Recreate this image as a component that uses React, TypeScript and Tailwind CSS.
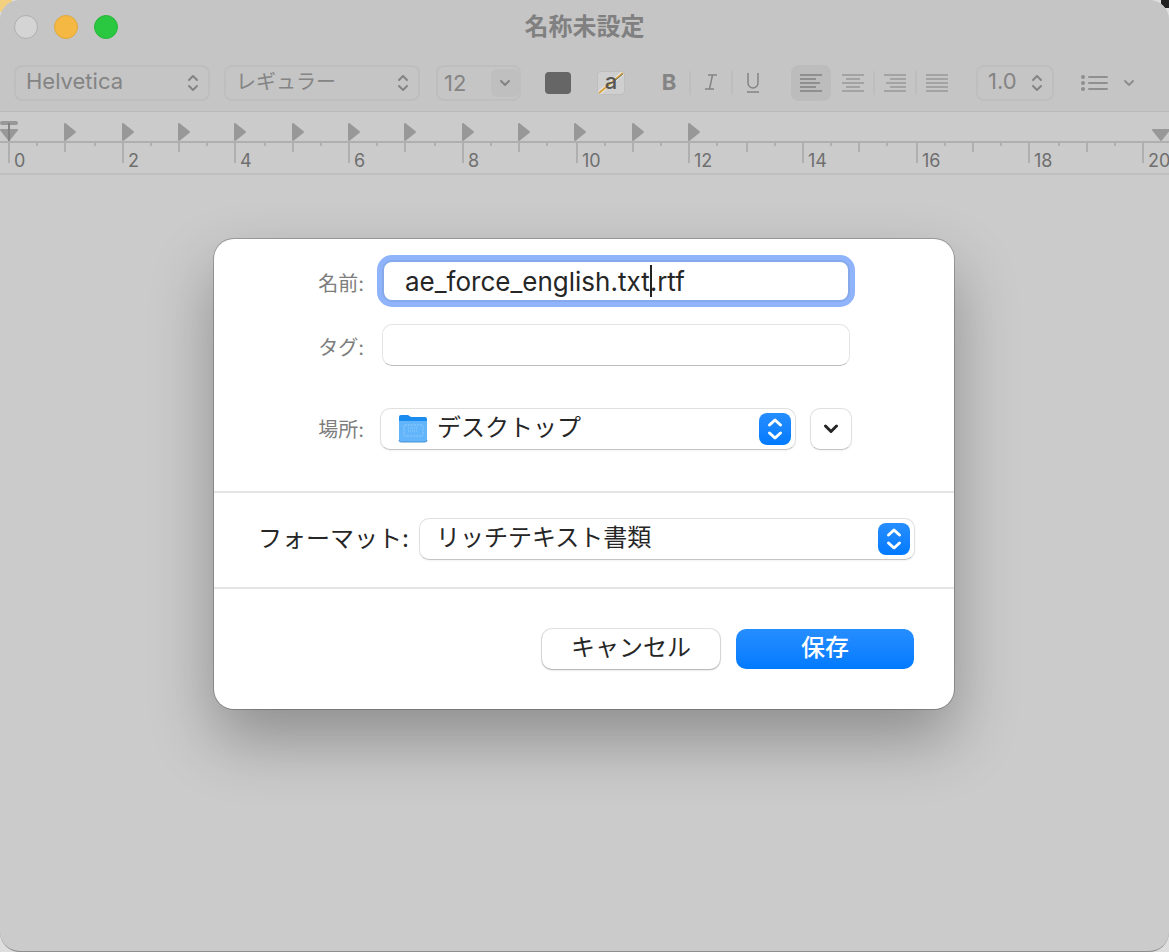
import React, { useState } from 'react'

type Align = 'left' | 'center' | 'right' | 'justify'

// Line insets of the alignment glyphs: [start, width] per row
const ALIGN_LINES: Record<Align, [number, number][]> = {
  left: [[0, 22], [0, 16], [0, 20], [0, 16], [0, 22]],
  center: [[0, 22], [4, 14], [0, 22], [4, 14], [0, 22]],
  right: [[0, 22], [6, 16], [2, 20], [6, 16], [0, 22]],
  justify: [[0, 22], [0, 22], [0, 22], [0, 22], [0, 22]]
}

const ALIGN_LABELS: Record<Align, string> = {
  left: '左揃え',
  center: '中央揃え',
  right: '右揃え',
  justify: '両端揃え'
}

const ALIGNS: Align[] = ['left', 'center', 'right', 'justify']

function AlignIcon({ type }: { type: Align }) {
  return (
    <svg width="22" height="18" viewBox="0 0 22 18" fill="currentColor" aria-hidden="true">
      {ALIGN_LINES[type].map(([x, w], i) => (
        <rect key={i} x={x} y={i * 4} width={w} height={2} />
      ))}
    </svg>
  )
}

function UpDownIcon({ className = '' }: { className?: string }) {
  return (
    <svg width="12" height="18" viewBox="0 0 12 18" fill="none" stroke="currentColor" strokeWidth="2" strokeLinecap="round" strokeLinejoin="round" className={className} aria-hidden="true">
      <path d="M2 6l4-4 4 4M2 12l4 4 4-4" />
    </svg>
  )
}

function DownIcon({ className = '' }: { className?: string }) {
  return (
    <svg width="12" height="8" viewBox="0 0 12 8" fill="none" stroke="currentColor" strokeWidth="2" strokeLinecap="round" strokeLinejoin="round" className={className} aria-hidden="true">
      <path d="M2 2l4 4 4-4" />
    </svg>
  )
}

function BlueStepper() {
  return (
    <span className="pointer-events-none absolute inset-y-0 right-[5px] my-auto flex size-8 items-center justify-center rounded-lg bg-linear-to-b from-[#258eff] to-[#007aff] text-white">
      <svg width="16" height="24" viewBox="0 0 16 24" fill="none" stroke="currentColor" strokeWidth="3" strokeLinecap="round" strokeLinejoin="round" aria-hidden="true">
        <path d="M2.500 8L8 3l5.500 5M2.500 16L8 21l5.500-5" />
      </svg>
    </span>
  )
}

function FolderIcon() {
  return (
    <svg width="30" height="28" viewBox="0 0 30 28" className="pointer-events-none absolute inset-y-0 left-[18px] my-auto" aria-hidden="true">
      <path d="M1 2a2 2 0 0 1 2-2h7l3 2h14a2 2 0 0 1 2 2v8H1z" fill="#1a8cf0" />
      <path d="M1 6h28v19a2 2 0 0 1-2 2H3a2 2 0 0 1-2-2z" fill="#62b5fb" />
      <path d="M1 25a2 2 0 0 0 2 2h24a2 2 0 0 0 2-2" fill="none" stroke="#4a93cf" />
      <rect x="6" y="10" width="19" height="11" rx="1" fill="none" stroke="#8fc9fb" strokeDasharray="2 1" />
      <path d="M10 13h10M10 16h10" stroke="#8fc9fb" strokeDasharray="1 1" />
    </svg>
  )
}

function Ruler() {
  // Ticks sit every half centimetre, snapped to even pixels
  const snap = (n: number, step: number) => 8 + 2 * Math.round(n * step)
  const tickX = (n: number) => snap(n, 14.176)
  const ticks = Array.from({ length: 42 }, (_, n) => n)
  const tabs = Array.from({ length: 12 }, (_, i) => snap((i + 1) * 2, 14.173))

  return (
    <svg className="block h-[63px] w-full shrink-0 border-b-2 border-[#bfbfbf]" role="img" aria-label="ルーラー">
      <rect x="0" y="29" width="100%" height="2" fill="#afafaf" />
      {ticks.map(n => (
        <rect
          key={n}
          x={tickX(n)}
          y={31}
          width={2}
          height={n % 4 === 0 ? 20 : n % 2 === 0 ? 9 : 3}
          fill="#afafaf"
        />
      ))}
      {ticks.filter(n => n % 4 === 0).map(n => (
        <text key={n} x={tickX(n) + 6} y={55} fontSize={18} fill="#6f6f6f">
          {n / 2}
        </text>
      ))}
      {tabs.map(x => (
        <path key={x} d={`M${x + 1} 12l10 8-10 8z`} fill="#989898" stroke="#989898" strokeWidth="2" strokeLinejoin="round" />
      ))}
      {/* Indent markers */}
      <rect x="0" y="9" width="18" height="4" rx="2" fill="#989898" />
      <path d="M1 18h16l-8 10z" fill="#989898" stroke="#989898" strokeWidth="2" strokeLinejoin="round" />
      <rect x="8" y="11" width="2" height="18" fill="#828282" />
      <path d="M1153 18h16l-8 10z" fill="#989898" stroke="#989898" strokeWidth="2" strokeLinejoin="round" />
    </svg>
  )
}

function ToolbarSelect({ label, value, className, textClass }: { label: string; value: string; className: string; textClass: string }) {
  return (
    <div className={`relative h-9 shrink-0 text-[#848484] ${className}`}>
      <select aria-label={label} defaultValue={value} className={`size-full appearance-none rounded-lg border-2 border-[#bebebe] bg-transparent pr-6 pb-1 pl-2.5 outline-none ${textClass}`}>
        <option>{value}</option>
      </select>
      <UpDownIcon className="pointer-events-none absolute inset-y-0 right-[11px] my-auto" />
    </div>
  )
}

function Separator({ hidden = false }: { hidden?: boolean }) {
  return <span className={`h-6 w-0.5 ${hidden ? 'bg-transparent' : 'bg-[#bebebe]'}`} />
}

function Toolbar() {
  const [align, setAlign] = useState<Align>('left')

  return (
    <div className="flex h-9 items-center pl-3.5 text-[#848484]">
      <ToolbarSelect label="フォント" value="Helvetica" className="w-[196px]" textClass="font-[Inter] text-[22px] leading-6" />
      <ToolbarSelect label="書体" value="レギュラー" className="ml-3.5 w-[196px]" textClass="text-[20px]" />

      <div className="ml-4 flex h-9 w-[85px] shrink-0 items-center rounded-lg border-2 border-[#bebebe]">
        <input aria-label="サイズ" defaultValue="12" className="w-0 flex-1 bg-transparent pl-1.5 text-[22px] outline-none" />
        <button type="button" aria-label="サイズを選択" className="flex h-7 w-7 items-center justify-center rounded-md bg-[#bfbfbf]">
          <DownIcon />
        </button>
      </div>

      <button type="button" aria-label="文字の色" className="ml-6 h-[22px] w-[26px] shrink-0 rounded-sm bg-[#666]" />
      <button type="button" aria-label="背景色" className="relative ml-[26px] flex h-6 w-7 shrink-0 items-center justify-center rounded-sm border border-[#bebebe] bg-[#cfcfcf] text-[22px] leading-7 font-medium text-[#555]">
        <svg width="26" height="22" viewBox="0 0 26 22" className="absolute inset-0" aria-hidden="true">
          <path d="M1 21L25 1" stroke="#e9e9e9" strokeWidth="4" />
          <path d="M1 21L25 1" stroke="#d9a33a" strokeWidth="2" />
          <path d="M17 8.500L25 2" stroke="#777" strokeWidth="1" />
        </svg>
        <span className="relative pb-1">a</span>
      </button>

      <div className="ml-6 flex shrink-0 items-center">
        <button type="button" aria-label="ボールド" className="h-9 w-10 pb-0.5 text-[22px] font-bold">B</button>
        <Separator />
        <button type="button" aria-label="イタリック" className="flex h-9 w-10 items-center justify-center pb-0.5">
          <svg width="14" height="18" viewBox="0 0 14 18" fill="none" stroke="currentColor" strokeWidth="1.500" aria-hidden="true">
            <path d="M4 2h9M1 16h9M8.500 2L5.500 16" />
          </svg>
        </button>
        <Separator />
        <button type="button" aria-label="アンダーライン" className="flex h-9 w-10 items-center justify-center">
          <svg width="14" height="20" viewBox="0 0 14 20" fill="none" stroke="currentColor" strokeWidth="1.500" aria-hidden="true">
            <path d="M2 0v10a5 5 0 0 0 10 0V0M1 19h12" />
          </svg>
        </button>
      </div>

      <div className="ml-[18px] flex shrink-0 items-center">
        {ALIGNS.map((type, i) => (
          <React.Fragment key={type}>
            {i > 0 && <Separator hidden={i === 1} />}
            <button
              type="button"
              aria-label={ALIGN_LABELS[type]}
              aria-pressed={align === type}
              onClick={() => setAlign(type)}
              className={`flex h-9 w-10 items-center justify-center rounded-lg ${align === type ? 'bg-[#bcbcbc] text-[#8f8f8f]' : 'text-[#a3a3a3]'}`}
            >
              <AlignIcon type={type} />
            </button>
          </React.Fragment>
        ))}
      </div>

      <ToolbarSelect label="行間" value="1.0" className="ml-[19px] w-[78px]" textClass="font-[Inter] text-[22px] leading-6" />

      <button type="button" aria-label="リスト" className="ml-[26px] flex h-9 shrink-0 items-center gap-3.5 text-[#8f8f8f]">
        <svg width="29" height="18" viewBox="0 0 29 18" fill="none" stroke="currentColor" strokeWidth="2" strokeLinecap="round" aria-hidden="true">
          <path d="M9 3h18M9 9h18M9 15h18" />
          <path d="M3 3h.01M3 9h.01M3 15h.01" strokeWidth="4" />
        </svg>
        <DownIcon />
      </button>
    </div>
  )
}

function SaveDialog() {
  const [name, setName] = useState('ae_force_english.txt.rtf')
  const [tags, setTags] = useState('')

  return (
    <form
      role="dialog"
      aria-label="保存"
      onSubmit={e => e.preventDefault()}
      className="w-full max-w-[740px] rounded-[20px] bg-white text-[#262626] shadow-[0_0_0_1px_rgba(0,0,0,0.22),0_30px_64px_rgba(0,0,0,0.3)]"
    >
      <div className="grid grid-cols-[150px_1fr] items-center gap-x-4 border-b-2 border-[#e5e5e5] pt-[21px] pr-[102px] pb-[41px] text-[20px]">
        <label htmlFor="name" className="pt-1.5 text-right text-[#7d7d7d]">名前:</label>
        <div className="relative mx-0.5">
          <input
            id="name"
            value={name}
            onChange={e => setName(e.target.value)}
            className="block h-[42px] w-full rounded-[10px] border-2 border-[#86a9ec] bg-white pl-[21px] text-[26px] ring-5 ring-[#8fb4fb] outline-none"
          />
          <span className="absolute inset-y-0 left-[268px] my-auto h-8 w-0.5 bg-[#222]" />
        </div>

        <label htmlFor="tags" className="mt-[22px] pt-1.5 text-right text-[#7d7d7d]">タグ:</label>
        <input
          id="tags"
          value={tags}
          onChange={e => setTags(e.target.value)}
          className="mx-0.5 mt-[22px] h-[42px] rounded-[10px] border border-[#e4e4e4] border-b-[#bdbdbd] bg-white px-5 text-[24px] outline-none"
        />

        <label htmlFor="place" className="mt-[42px] pt-0.5 text-right text-[#7d7d7d]">場所:</label>
        <div className="mt-[42px] flex gap-3.5">
          <div className="relative flex-1">
            <select id="place" defaultValue="デスクトップ" className="h-[42px] w-full appearance-none rounded-[10px] border border-[#e0e0e0] border-b-[#c4c4c4] bg-white pr-10 pb-0.5 pl-14 text-[24px] shadow-xs outline-none">
              <option>デスクトップ</option>
            </select>
            <FolderIcon />
            <BlueStepper />
          </div>
          <button type="button" aria-label="詳細を表示" className="flex size-[42px] items-center justify-center rounded-[10px] border border-[#e0e0e0] border-b-[#c4c4c4] bg-white shadow-xs">
            <svg width="16" height="10" viewBox="0 0 16 10" fill="none" stroke="currentColor" strokeWidth="3" strokeLinecap="round" strokeLinejoin="round" aria-hidden="true">
              <path d="M2.500 2L8 7.500 13.500 2" />
            </svg>
          </button>
        </div>
      </div>

      <div className="flex items-center gap-2.5 border-b-2 border-[#e5e5e5] pt-[25px] pr-[39px] pb-[27px] pl-11 text-[24px]">
        <label htmlFor="format">フォーマット:</label>
        <div className="relative flex-1">
          <select id="format" defaultValue="リッチテキスト書類" className="h-[42px] w-full appearance-none rounded-[10px] border border-[#e0e0e0] border-b-[#c4c4c4] bg-white pr-10 pb-0.5 pl-4 shadow-xs outline-none">
            <option>リッチテキスト書類</option>
          </select>
          <BlueStepper />
        </div>
      </div>

      <div className="flex justify-end gap-4 p-10 text-[24px]">
        <button type="button" className="h-10 w-[178px] rounded-[10px] bg-white pb-0.5 shadow-[0_0_0_1px_rgba(0,0,0,0.1),0_1px_2px_rgba(0,0,0,0.25)]">キャンセル</button>
        <button type="submit" className="h-10 w-[178px] rounded-[10px] bg-linear-to-b from-[#258eff] to-[#007aff] pb-0.5 font-medium text-white">保存</button>
      </div>
    </form>
  )
}

export default function App() {
  return (
    <div className="relative bg-[#dedede] font-[Inter,'Noto_Sans_CJK_JP',sans-serif]">
      <span className="absolute top-0 left-0 size-3 bg-[#f3cf80]" />
      <span className="absolute top-0 right-0 size-2 bg-[#222]" />
      <div className="relative flex min-h-screen flex-col overflow-hidden rounded-[20px] border-b border-[#8f8f8f] bg-[#cbcbcb]">
        <header className="h-28 shrink-0 border-b border-[#bababa] bg-[#c5c5c5]">
          <div className="grid h-[65px] grid-cols-[1fr_auto_1fr] items-center pb-3">
            <div className="flex gap-4 pl-3.5">
              <button type="button" aria-label="閉じる" className="size-6 rounded-full border border-[#adadad] bg-[#d4d4d4]" />
              <button type="button" aria-label="しまう" className="size-6 rounded-full border border-[#dda93f] bg-[#f5b843]" />
              <button type="button" aria-label="拡大" className="size-6 rounded-full border border-[#2bb53c] bg-[#29c840]" />
            </div>
            <h1 className="text-[24px] leading-8 font-bold text-[#808080]">名称未設定</h1>
          </div>
          <Toolbar />
        </header>
        <Ruler />
        <main className="flex flex-1 items-start justify-center pt-16 pr-px pb-16">
          <SaveDialog />
        </main>
      </div>
    </div>
  )
}
